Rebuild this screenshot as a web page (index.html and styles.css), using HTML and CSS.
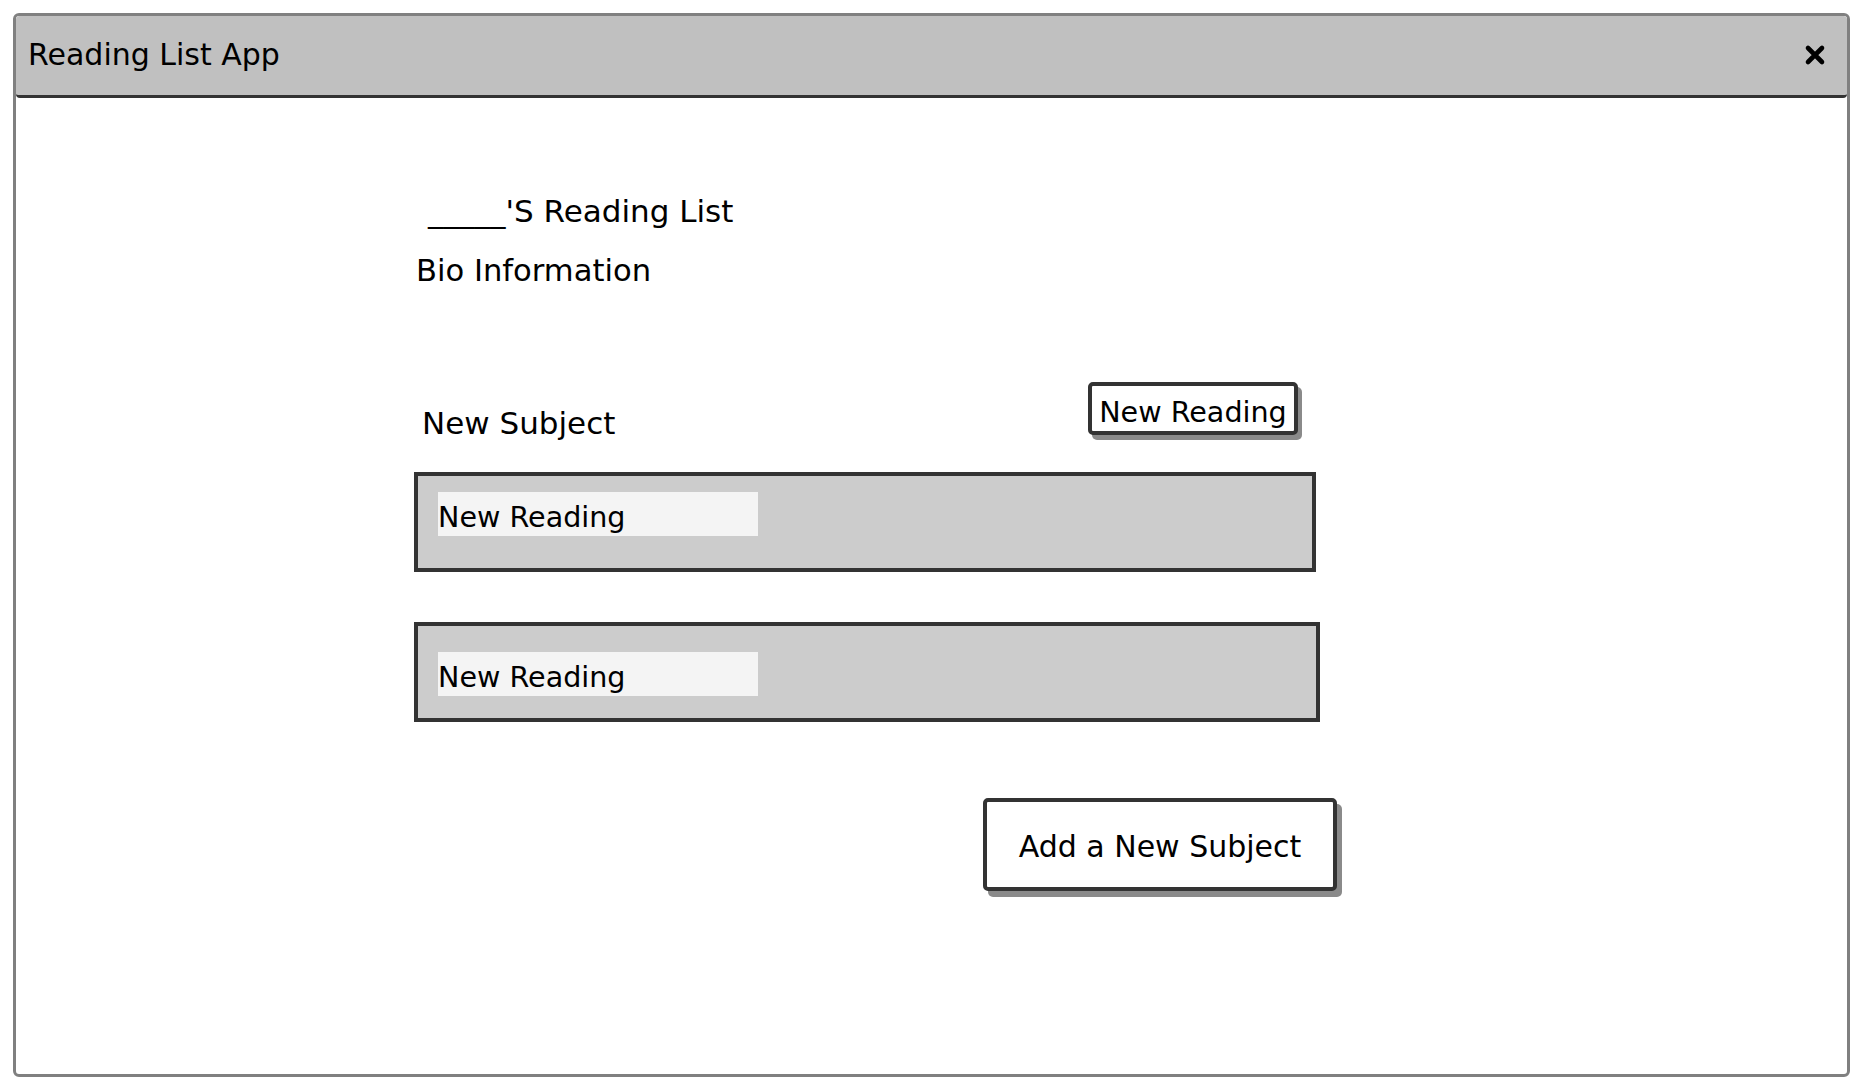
FILE: index.html
```html
<!DOCTYPE html>
<html lang="en">
<head>
<meta charset="utf-8">
<title>Reading List App</title>
<link rel="stylesheet" href="styles.css">
</head>
<body>
<div class="window">
  <div class="titlebar">
    <span class="title">Reading List App</span>
    <svg class="close" width="22" height="22" viewBox="0 0 22 22" aria-label="close">
      <path d="M4 4 L18 18 M18 4 L4 18" stroke="#000" stroke-width="4.6" stroke-linecap="round" fill="none"/>
    </svg>
  </div>
  <div class="content">
    <h1 class="list-title">_____'S Reading List</h1>
    <p class="bio">Bio Information</p>
    <div class="subject-head">
      <span class="subject-name">New Subject</span>
      <button class="btn btn-small">New Reading</button>
    </div>
    <div class="reading-box">
      <div class="reading-label">New Reading</div>
    </div>
    <div class="reading-box reading-box--second">
      <div class="reading-label">New Reading</div>
    </div>
    <div class="add-row">
      <button class="btn btn-large">Add a New Subject</button>
    </div>
  </div>
</div>
</body>
</html>
```

FILE: styles.css
```css
html, body {
  margin: 0;
  padding: 0;
  background: #ffffff;
}

body {
  font-family: "DejaVu Sans", "Liberation Sans", sans-serif;
  color: #000000;
}

.window {
  box-sizing: border-box;
  margin: 13px 12px 0 13px;
  height: 1064px;
  border: 3px solid #808080;
  border-radius: 6px;
  background: #ffffff;
  overflow: hidden;
}

.titlebar {
  box-sizing: border-box;
  height: 82px;
  padding: 0 21px 2px 12px;
  background: #c0c0c0;
  border-bottom: 3px solid #333333;
  border-radius: 3px 3px 4px 4px;
  display: flex;
  align-items: center;
  justify-content: space-between;
}

.title {
  font-size: 30px;
  line-height: 36px;
}

.close {
  display: block;
}

.content {
  padding: 95px 0 0 398px;
}

.list-title {
  margin: 0;
  padding-left: 14px;
  font-size: 31px;
  font-weight: normal;
  line-height: 36px;
}

.bio {
  margin: 24px 0 0 0;
  padding-left: 2px;
  font-size: 30.6px;
  line-height: 36px;
}

.subject-head {
  margin-top: 93px;
  width: 902px;
  height: 53px;
  display: flex;
  align-items: flex-start;
}

.subject-name {
  margin: 23px 0 0 8px;
  font-size: 31px;
  line-height: 36px;
}

.btn {
  box-sizing: border-box;
  font-family: "DejaVu Sans", "Liberation Sans", sans-serif;
  color: #000000;
  background: #ffffff;
  border: 4px solid #333333;
  border-radius: 5px;
  box-shadow: 4px 5px 0 #8a8a8a;
  padding: 0;
  margin: 0;
  text-align: center;
  cursor: pointer;
}

.btn-small {
  margin-left: auto;
  margin-right: 18px;
  width: 210px;
  height: 53px;
  padding-top: 7px;
  font-size: 28.6px;
  line-height: 38px;
  display: flex;
  justify-content: center;
  align-items: flex-start;
  white-space: nowrap;
}

.reading-box {
  box-sizing: border-box;
  margin-top: 37px;
  width: 902px;
  height: 100px;
  border: 4px solid #333333;
  background: #cccccc;
  padding: 16px 0 0 20px;
}

.reading-box--second {
  margin-top: 50px;
  width: 906px;
  padding-top: 26px;
}

.reading-label {
  box-sizing: border-box;
  width: 320px;
  height: 44px;
  background: #f4f4f4;
  padding-top: 6px;
  font-size: 28.6px;
  line-height: 38px;
  white-space: nowrap;
}

.add-row {
  margin-top: 76px;
  padding-left: 569px;
}

.btn-large {
  width: 354px;
  height: 93px;
  padding-top: 4px;
  font-size: 30px;
  line-height: 81px;
  box-shadow: 5px 6px 0 #8a8a8a;
}
```
